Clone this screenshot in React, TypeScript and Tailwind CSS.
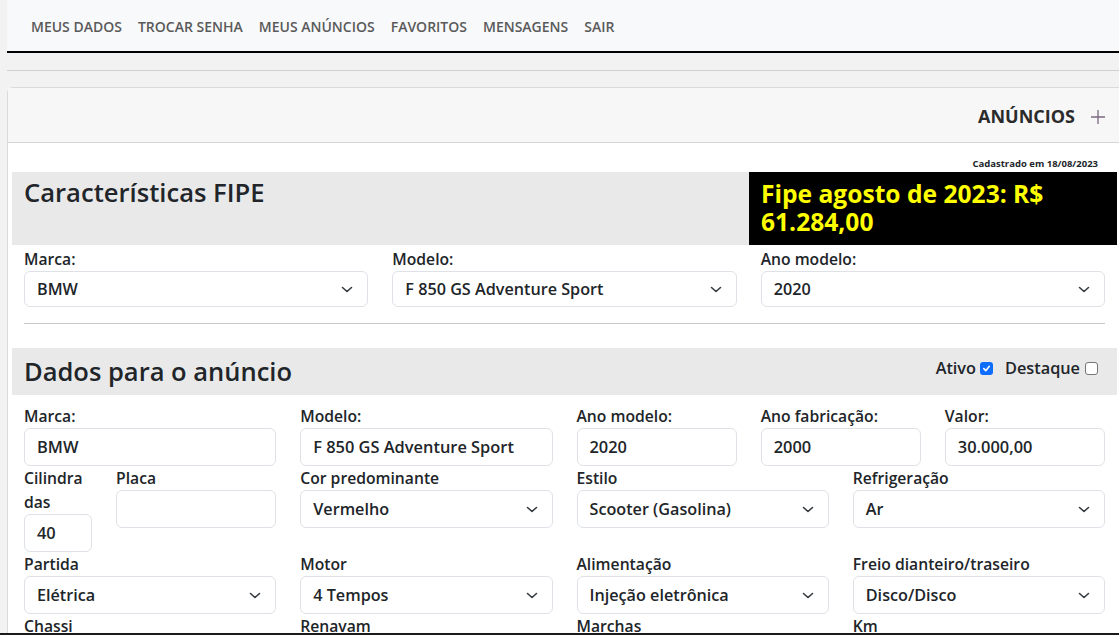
import React from "react";

const Chevron = () => (
  <svg width="16" height="12" viewBox="0 0 16 12" fill="none" className="shrink-0">
    <path d="M3.5 4.5 8 8.5l4.5-4" stroke="#343a40" strokeWidth="1.6" strokeLinecap="round" strokeLinejoin="round" />
  </svg>
);

const Label = ({ children }: { children: React.ReactNode }) => (
  <div className="text-[15.7px] leading-[24px] font-semibold text-[#212529]">{children}</div>
);

const Input = ({ value, h = "h-[38px]" }: { value: string; h?: string }) => (
  <div className={`${h} w-full rounded-md border border-[#dee2e6] bg-white px-3 flex items-center text-[16.4px] font-semibold text-[#212529]`}>
    {value}
  </div>
);

const Select = ({ value, h = "h-[38px]" }: { value: string; h?: string }) => (
  <div className={`${h} w-full rounded-md border border-[#dee2e6] bg-white pl-3 pr-3 flex items-center justify-between text-[16.2px] font-semibold text-[#212529]`}>
    <span>{value}</span>
    <Chevron />
  </div>
);

const Field = ({ label, children, className = "" }: { label: React.ReactNode; children: React.ReactNode; className?: string }) => (
  <div className={`px-3 ${className}`}>
    <Label>{label}</Label>
    {children}
  </div>
);

export default function App() {
  const nav = ["MEUS DADOS", "TROCAR SENHA", "MEUS ANÚNCIOS", "FAVORITOS", "MENSAGENS", "SAIR"];
  return (
    <div className="relative h-[635px] w-[1119px] overflow-hidden bg-[#f1f2f1] pl-[7px] font-['Open_Sans','Liberation_Sans',sans-serif]">
      <nav className="flex h-[53px] items-center border-b-2 border-black bg-[#f8f9fa] pl-[16px] pt-[2px]">
        {nav.map((n) => (
          <span key={n} className="px-2 text-[14px] font-semibold text-[#5a5a5a]">
            {n}
          </span>
        ))}
      </nav>
      <div className="h-[18px] border-b border-[#cfcfcf]" />
      <div className="mt-[16px] w-[1116px] rounded-tl-md border border-[#dadada] bg-white">
        <div className="flex h-[55px] items-center justify-end border-b border-[#d6d6d6] bg-[#f7f7f7] pr-[16px] pt-[3px]">
          <span className="mr-[2px] text-[18px] font-bold text-[#2b2b2b]">ANÚNCIOS</span>
          <svg width="16" height="16" viewBox="0 0 16 16" className="ml-[13px]">
            <path d="M8 1v14M1 8h14" stroke="#7a6a80" strokeWidth="1.3" />
          </svg>
        </div>
        <div className="pl-[4px]">
          <div className="h-[29px] pt-[14px] pr-[24px] text-right text-[9.5px] font-bold leading-[14px] text-[#212529]">
            Cadastrado em 18/08/2023
          </div>
          <div className="flex w-[1105px]">
            <div className="w-[737px] bg-[#e9e9e9] px-3 pt-[6px]">
              <h2 className="text-[25.6px] font-semibold leading-[30px] text-[#212529]">Características FIPE</h2>
            </div>
            <div className="w-[368px] bg-black px-3 pt-2 pb-[9px]">
              <div className="text-[24.6px] font-bold leading-[28px] text-[#ffff00]">
                Fipe agosto de 2023: R$ 61.284,00
              </div>
            </div>
          </div>
          <div className="mt-[2px] grid w-[1105px] grid-cols-3">
            <Field label="Marca:">
              <Select value="BMW" h="h-[36px]" />
            </Field>
            <Field label="Modelo:">
              <Select value="F 850 GS Adventure Sport" h="h-[36px]" />
            </Field>
            <Field label="Ano modelo:">
              <Select value="2020" h="h-[36px]" />
            </Field>
          </div>
          <div className="mx-3 mt-4 mb-6 w-[1081px] border-t border-[#c8c8c8]" />
          <div className="flex h-[47px] w-[1105px] items-center justify-between bg-[#e9e9e9] px-3">
            <h2 className="text-[25.5px] font-semibold text-[#212529]">Dados para o anúncio</h2>
            <div className="-mt-[6px] flex items-center pr-[7px] text-[16.3px] font-semibold text-[#212529]">
              <span>Ativo</span>
              <span className="ml-[4px] flex h-[13px] w-[13px] items-center justify-center rounded-[3px] bg-[#0d6efd]">
                <svg width="9" height="9" viewBox="0 0 10 10">
                  <path d="M2 5.2 4.2 7.4 8.2 2.6" stroke="white" strokeWidth="1.8" fill="none" strokeLinecap="round" strokeLinejoin="round" />
                </svg>
              </span>
              <span className="ml-[12px]">Destaque</span>
              <span className="ml-[5px] h-[13px] w-[13px] rounded-[3px] border border-[#767676] bg-white" />
            </div>
          </div>
          <div className="mt-[9px] grid w-[1105px] grid-cols-12">
            <Field label="Marca:" className="col-span-3">
              <Input value="BMW" />
            </Field>
            <Field label="Modelo:" className="col-span-3">
              <Input value="F 850 GS Adventure Sport" />
            </Field>
            <Field label="Ano modelo:" className="col-span-2">
              <Input value="2020" />
            </Field>
            <Field label="Ano fabricação:" className="col-span-2">
              <Input value="2000" />
            </Field>
            <Field label="Valor:" className="col-span-2">
              <Input value="30.000,00" />
            </Field>

            <div className="col-span-3 grid grid-cols-3">
              <Field
                label={
                  <>
                    Cilindra
                    <br />
                    das
                  </>
                }
                className="col-span-1"
              >
                <Input value="40" />
              </Field>
              <Field label="Placa" className="col-span-2">
                <Input value="" />
              </Field>
            </div>
            <Field label="Cor predominante" className="col-span-3">
              <Select value="Vermelho" />
            </Field>
            <Field label="Estilo" className="col-span-3">
              <Select value="Scooter (Gasolina)" />
            </Field>
            <Field label="Refrigeração" className="col-span-3">
              <Select value="Ar" />
            </Field>

            <Field label="Partida" className="col-span-3">
              <Select value="Elétrica" />
            </Field>
            <Field label="Motor" className="col-span-3">
              <Select value="4 Tempos" />
            </Field>
            <Field label="Alimentação" className="col-span-3">
              <Select value="Injeção eletrônica" />
            </Field>
            <Field label="Freio dianteiro/traseiro" className="col-span-3">
              <Select value="Disco/Disco" />
            </Field>

            <Field label="Chassi" className="col-span-3">
              <Input value="" />
            </Field>
            <Field label="Renavam" className="col-span-3">
              <Input value="" />
            </Field>
            <Field label="Marchas" className="col-span-3">
              <Input value="" />
            </Field>
            <Field label="Km" className="col-span-3">
              <Input value="" />
            </Field>
          </div>
        </div>
      </div>
      <div className="absolute bottom-0 left-0 h-[2px] w-full bg-[#1a1a1a]" />
    </div>
  );
}
